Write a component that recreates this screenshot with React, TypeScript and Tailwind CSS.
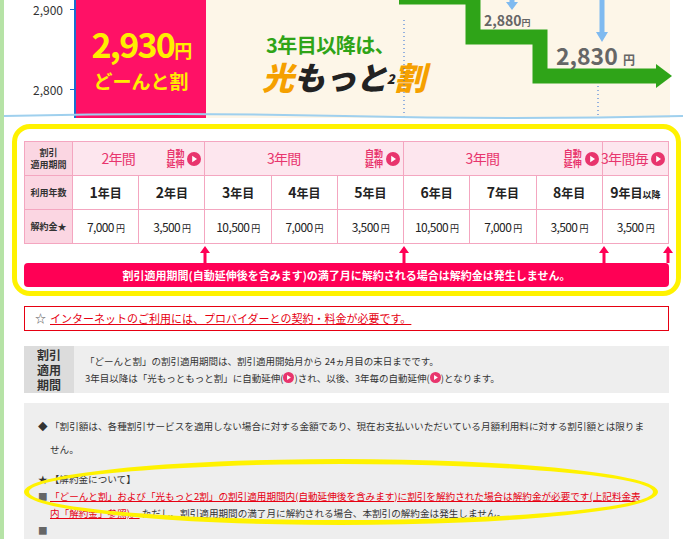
import React from 'react'

const font = { fontFamily: '"Noto Sans CJK JP", "Noto Sans", sans-serif' }

function Play({ size = 14 }: { size?: number }) {
  return (
    <svg width={size} height={size} viewBox="0 0 14 14" className="inline-block shrink-0">
      <circle cx="7" cy="7" r="7" fill="#e8356d" />
      <path d="M5.2 3.8 L10 7 L5.2 10.2 Z" fill="#fff" />
    </svg>
  )
}

function HeadCell({ span, label, ext }: { span: number; label: string; ext?: boolean }) {
  return (
    <td colSpan={span} className="border border-[#f4a6c0] bg-[#fde6ee] h-[34px] p-0">
      <div className="flex items-center justify-end pr-[3px] gap-[3px]">
        <span className="flex-1 text-center text-[14px] text-[#e8356d] whitespace-nowrap tracking-tighter">{label}</span>
        {ext && <span className="text-[9px] leading-[10px] text-[#e8356d] font-bold">自動<br />延伸</span>}
        <Play />
      </div>
    </td>
  )
}

const years = ['1', '2', '3', '4', '5', '6', '7', '8', '9']
const fees = ['7,000', '3,500', '10,500', '7,000', '3,500', '10,500', '7,000', '3,500', '3,500']

export default function App() {
  return (
    <div className="w-[683px] h-[539px] overflow-hidden bg-white flex" style={font}>
      <div className="w-[4px] bg-[#b6e3a6] shrink-0" />
      <div className="flex-1 flex flex-col">
        {/* chart */}
        <div className="relative h-[120px] shrink-0">
          <div className="absolute left-[201px] top-0 w-[465px] h-[118px] bg-[#fdf6e8]" />
          <div className="absolute left-[70px] top-0 w-[2px] h-[118px] bg-[#1a6fd0]" />
          <div className="absolute left-[29px] top-[1px] text-[12px] text-[#333]">2,900</div>
          <div className="absolute left-[29px] top-[81px] text-[12px] text-[#333]">2,800</div>
          <div className="absolute left-[66px] top-[9px] w-[5px] h-[1px] bg-[#1a6fd0]" />
          <div className="absolute left-[66px] top-[89px] w-[5px] h-[1px] bg-[#1a6fd0]" />
          <div className="absolute left-[72px] top-0 w-[130px] h-[118px] bg-[#ff1166] flex flex-col items-center justify-center text-[#ffef00] font-bold">
            <div className="text-[34px] leading-[38px] tracking-tighter">2,930<span className="text-[18px]">円</span></div>
            <div className="text-[19px] leading-[24px]">どーんと割</div>
          </div>
          <div className="absolute left-[262px] top-[30px] text-[20px] font-bold text-[#2fa418] tracking-tight">3年目以降は、</div>
          <div className="absolute left-[258px] top-[56px] text-[32px] leading-[40px] font-black italic tracking-tight text-[#222]">
            <span className="text-[#f5a000]">光</span>もっと<sup className="text-[13px]">2</sup><span className="text-[#f5a000]">割</span>
          </div>
          <svg className="absolute left-0 top-0" width="679" height="120">
            <path d="M395 -3 L469 -3 L469 37 L536 37 L536 76 L655 76" fill="none" stroke="#2fa418" strokeWidth="15" />
            <path d="M652 64 L668 76 L652 88 Z" fill="#2fa418" />
            <path d="M508 0 L508 4 M598 0 L598 34" stroke="#7fbaf0" strokeWidth="5" />
            <path d="M502 2 L514 2 L508 10 Z M592 32 L604 32 L598 42 Z" fill="#7fbaf0" />
            <path d="M400 20 L400 118 M594 86 L594 118" stroke="#2b6cd6" strokeWidth="1" strokeDasharray="1 3" />
            <path d="M0 116 Q170 112 340 116 T679 116" stroke="#9fd0ee" strokeWidth="2" fill="none" />
          </svg>
          <div className="absolute left-[480px] top-[10px] text-[14px] font-bold text-[#666]">2,880<span className="text-[9px]">円</span></div>
          <div className="absolute left-[552px] top-[38px] text-[23px] font-bold text-[#666]">2,830 <span className="text-[12px]">円</span></div>
        </div>

        {/* yellow frame */}
        <div className="mx-[8px] mt-[4px] border-[5px] border-[#fff200] rounded-[18px] px-[7px] pt-[12px] pb-[4px]">
          <table className="w-[645px] border-collapse table-fixed text-center">
            <colgroup>
              <col className="w-[48px]" />
              {years.map(y => <col key={y} />)}
            </colgroup>
            <tbody>
              <tr>
                <td className="border border-[#f4a6c0] bg-[#fbd6e2] text-[9px] leading-[12px] font-bold text-[#333]">割引<br />適用期間</td>
                <HeadCell span={2} label="2年間" ext />
                <HeadCell span={3} label="3年間" ext />
                <HeadCell span={3} label="3年間" ext />
                <HeadCell span={1} label="3年間毎" />
              </tr>
              <tr className="h-[34px]">
                <td className="border border-[#f4a6c0] bg-[#fbd6e2] text-[9px] font-bold text-[#333]">利用年数</td>
                {years.map(y => (
                  <td key={y} className="border border-[#f4a6c0] text-[14px] font-bold text-[#222]">
                    {y}<span className="text-[12px]">年目</span>{y === '9' && <span className="text-[9px]">以降</span>}
                  </td>
                ))}
              </tr>
              <tr className="h-[34px]">
                <td className="border border-[#f4a6c0] bg-[#fbd6e2] text-[9px] font-bold text-[#333]">解約金★</td>
                {fees.map((f, i) => (
                  <td key={i} className="border border-[#f4a6c0] text-[12px] text-[#222] tracking-tighter">
                    {f}<span className="text-[9px] ml-[2px]">円</span>
                  </td>
                ))}
              </tr>
            </tbody>
          </table>
          <div className="relative h-[19px]">
            {[181, 380, 580, 644].map(x => (
              <svg key={x} className="absolute top-[2px]" style={{ left: x - 5 }} width="10" height="17">
                <path d="M5 0 L10 7 L6.5 7 L6.5 17 L3.5 17 L3.5 7 L0 7 Z" fill="#ff0055" />
              </svg>
            ))}
          </div>
          <div className="w-[645px] h-[24px] rounded-[4px] bg-[#ff0055] text-white text-[11px] font-bold flex items-center justify-center">
            割引適用期間(自動延伸後を含みます)の満了月に解約される場合は解約金は発生しません。
          </div>
        </div>

        <div className="mx-[20px] mt-[10px] h-[26px] border border-[#e60012] flex items-center px-[10px] text-[11px]">
          <span className="text-[#555] mr-1">☆</span>
          <span className="text-[#e60012] underline">インターネットのご利用には、プロバイダーとの契約・料金が必要です。</span>
        </div>

        <div className="mx-[20px] mt-[15px] h-[50px] bg-[#eeeeee] flex">
          <div className="w-[50px] bg-[#dcdcdc] flex items-center justify-center text-[12px] font-bold leading-[15px] text-[#333] text-center">割引<br />適用<br />期間</div>
          <div className="flex-1 pl-[11px] flex flex-col justify-center gap-[3px] text-[9.5px] text-[#333]">
            <div>「どーんと割」の割引適用期間は、割引適用開始月から 24ヵ月目の末日までです。</div>
            <div className="flex items-center">3年目以降は「光もっともっと割」に自動延伸(<Play size={11} />)され、以後、3年毎の自動延伸(<Play size={11} />)となります。</div>
          </div>
        </div>

        <div className="relative mx-[20px] mt-[10px] flex-1 bg-[#eeeeee] px-[14px] pt-[12px] text-[9.6px] text-[#333] leading-[23px]">
          <div className="flex"><span className="w-[12px]">◆</span><span className="flex-1 pr-[6px]">「割引額は、各種割引サービスを適用しない場合に対する金額であり、現在お支払いいただいている月額利用料に対する割引額とは限りません。</span></div>
          <div className="mt-[10px] leading-[17px]">
            <div>★ 【解約金について】</div>
            <div className="flex"><span className="w-[12px] text-[#666]">■</span><span className="flex-1 pr-[14px]"><span className="text-[#e60012] underline">「どーんと割」および「光もっと2割」の割引適用期間内(自動延伸後を含みます)に割引を解約された場合は解約金が必要です(上記料金表内「解約金」参照)。</span> ただし、割引適用期間の満了月に解約される場合、本割引の解約金は発生しません。</span></div>
            <div className="text-[#666]">■</div>
          </div>
          <div className="absolute left-[0px] top-[56px] w-[634px] h-[66px] border-[5px] border-[#fff200] rounded-[50%] pointer-events-none" />
        </div>
      </div>
    </div>
  )
}
